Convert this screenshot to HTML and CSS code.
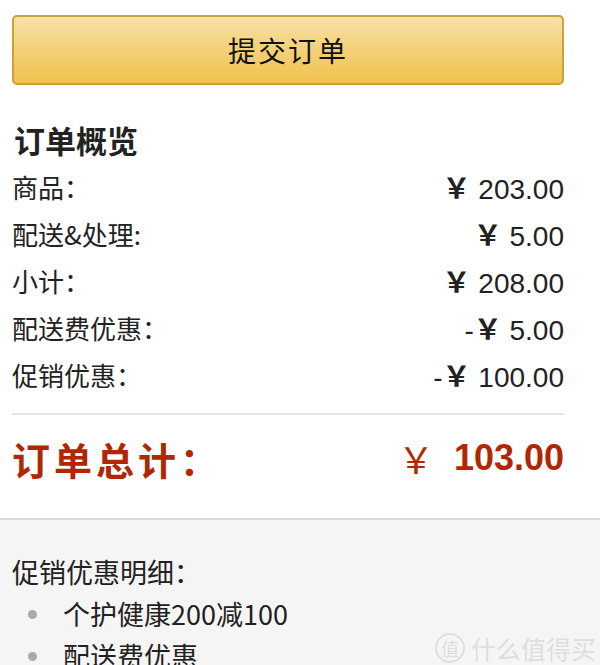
FILE: index.html
```html
<!DOCTYPE html>
<html lang="zh-CN">
<head>
  <meta charset="UTF-8" />
  <meta name="viewport" content="width=device-width, initial-scale=1" />
  <title>提交订单</title>
  <link rel="stylesheet" href="styles.css">
</head>
<body>

<div class="checkout">
  <button class="btn-submit">提交订单</button>

  <h3 class="summary-title">订单概览</h3>
  <div class="summary-row"><span>商品：</span><span class="amount"><i>￥</i> 203.00</span></div>
  <div class="summary-row"><span>配送&amp;处理:</span><span class="amount"><i>￥</i> 5.00</span></div>
  <div class="summary-row"><span>小计：</span><span class="amount"><i>￥</i> 208.00</span></div>
  <div class="summary-row"><span>配送费优惠：</span><span class="amount">-<i>￥</i> 5.00</span></div>
  <div class="summary-row"><span>促销优惠：</span><span class="amount">-<i>￥</i> 100.00</span></div>

  <div class="divider"></div>

  <div class="total-row">
    <span class="total-label">订单总计：</span>
    <span class="total-amount"><i>￥</i><b>103.00</b></span>
  </div>
</div>

<!-- 促销明细 -->
<div class="promo">
  <p>促销优惠明细：</p>
  <ul>
    <li>个护健康200减100</li>
    <li>配送费优惠</li>
  </ul>
  <div class="watermark"><span class="wm-logo">值</span>什么值得买</div>
</div>

</body>
</html>
```

FILE: styles.css
```css
* { box-sizing: border-box; }
body {
  margin: 0;
  background-color: #fff;
  color: #222;
  font-family: 'Liberation Sans', 'Noto Sans CJK SC', sans-serif;
  font-size: 27px;
  overflow: hidden;
}
i {
  font-style: normal;
  font-family: 'Noto Sans CJK SC', sans-serif;
}
.checkout {
  padding: 15px 36px 0 12px;
}
.btn-submit {
  display: block;
  width: 100%;
  height: 70px;
  border: 2px solid #c9a23c;
  border-radius: 5px;
  background: linear-gradient(to bottom, #f8dfa6, #efc24c);
  color: #111;
  font-family: 'Noto Sans CJK SC', sans-serif;
  font-size: 28px;
  letter-spacing: 2px;
  cursor: pointer;
}
.summary-title {
  margin: 31px 0 0 2px;
  height: 47px;
  font-family: 'Noto Sans CJK SC', sans-serif;
  font-size: 31px;
  line-height: 47px;
  font-weight: bold;
  color: #222;
}
.summary-row {
  display: flex;
  justify-content: space-between;
  align-items: center;
  height: 47px;
  font-family: 'Noto Sans CJK SC', sans-serif;
  font-size: 26px;
}
.summary-row .amount {
  font-family: 'Liberation Sans', sans-serif;
  font-size: 28px;
  color: #222;
}
.summary-row .amount i {
  font-size: 28px;
  font-weight: bold;
}
.divider {
  margin-top: 15px;
  height: 2px;
  background-color: #e4e4e4;
}
.total-row {
  display: flex;
  justify-content: space-between;
  align-items: center;
  height: 88px;
  padding-bottom: 2px;
  color: #b12704;
}
.total-label {
  font-family: 'Noto Sans CJK SC', sans-serif;
  font-size: 38px;
  font-weight: bold;
  letter-spacing: 4px;
}
.total-amount {
  display: flex;
  align-items: center;
  font-family: 'Liberation Sans', sans-serif;
  font-size: 36px;
}
.total-amount i {
  font-size: 36px;
  margin-right: 20px;
}
.promo {
  position: relative;
  margin-top: 15px;
  border-top: 2px solid #dadada;
  background-color: #f5f5f5;
  padding: 31px 12px 40px;
  font-family: 'Noto Sans CJK SC', sans-serif;
  font-size: 27px;
  line-height: 42px;
}
.promo p {
  margin: 0;
}
.promo ul {
  list-style: none;
  margin: 0;
  padding: 0;
}
.promo li {
  display: flex;
  align-items: center;
}
.promo li::before {
  content: "";
  width: 9px;
  height: 9px;
  border-radius: 50%;
  background-color: #aaa;
  margin: 0 26px 0 16px;
}
.watermark {
  position: absolute;
  right: 4px;
  top: 107px;
  display: flex;
  align-items: center;
  gap: 6px;
  font-size: 25px;
  color: #dedede;
}
.wm-logo {
  display: inline-flex;
  align-items: center;
  justify-content: center;
  width: 30px;
  height: 30px;
  border: 2px solid #dedede;
  border-radius: 50%;
  font-size: 18px;
}
```
